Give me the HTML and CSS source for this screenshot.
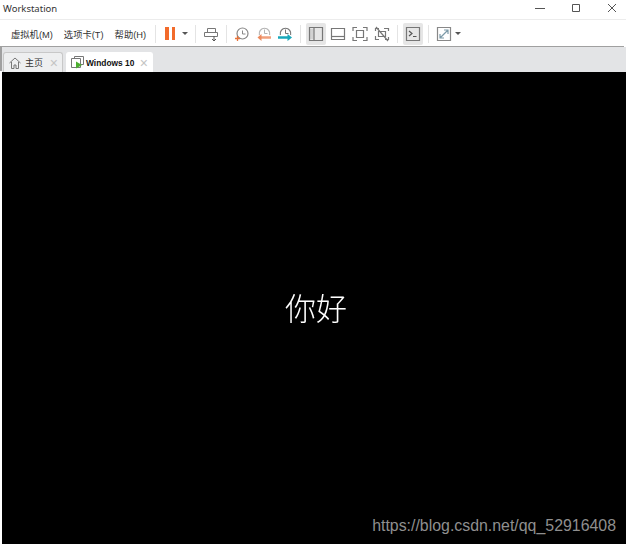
FILE: index.html
```html
<!DOCTYPE html>
<html lang="en">
  <head>
    <meta charset="UTF-8" />
    <title>Workstation</title>
    <link rel="stylesheet" href="styles.css">
  </head>
  <body>
    <div class="title-bar">
      <span class="title-text">Workstation</span>
      <div class="window-buttons">
        <svg width="12" height="12" viewBox="0 0 12 12"><path d="M1 6.500h10" stroke="#555" fill="none"/></svg>
        <svg width="12" height="12" viewBox="0 0 12 12"><path d="M2.500 2.500h7v7h-7z" stroke="#555" fill="none"/></svg>
        <svg width="12" height="12" viewBox="0 0 12 12"><path d="M2 2l8 8M10 2l-8 8" stroke="#555" fill="none"/></svg>
      </div>
    </div>
    <div class="tool-bar">
      <div class="menu">
        <span class="menu-item">虚拟机(M)</span>
        <span class="menu-item">选项卡(T)</span>
        <span class="menu-item">帮助(H)</span>
      </div>
      <span class="tool-sep"></span>
      <div class="tool-group pause-group">
        <span class="pause-bar"></span>
        <span class="pause-bar"></span>
        <span class="caret pause-caret"></span>
      </div>
      <span class="tool-sep"></span>
      <span class="tool-icon">
        <svg width="16" height="16" viewBox="0 0 16 16" fill="none" stroke="#777"><path d="M4.500 6.500v-4h8v4"/><path d="M1.500 6.500h13v4h-13z"/><path d="M11 10v5M9 13l2 2 2-2" stroke="#555"/></svg>
      </span>
      <span class="tool-sep"></span>
      <div class="tool-group snapshots">
        <span class="tool-icon">
          <svg width="16" height="16" viewBox="0 0 16 16" fill="none"><circle cx="8.500" cy="7.500" r="5.500" stroke="#888" stroke-width="1.200"/><path d="M8.500 4.500v3.500h3" stroke="#888"/><path d="M3.500 10v5M1 12.500h5" stroke="#e8743b" stroke-width="1.300"/></svg>
        </span>
        <span class="tool-icon">
          <svg width="16" height="16" viewBox="0 0 16 16" fill="none"><path d="M3.400 9a5.300 5.300 0 1 1 10.200 0" stroke="#b4b4b4" stroke-width="1.200"/><path d="M8.500 3.500v4h3" stroke="#b4b4b4"/><path d="M4 11.500h11" stroke="#f0a07c" stroke-width="2.500"/><path d="M5.500 8L1.500 11.500 5.500 15z" fill="#ec8a5e"/></svg>
        </span>
        <span class="tool-icon">
          <svg width="16" height="16" viewBox="0 0 16 16" fill="none"><path d="M3.400 9a5.300 5.300 0 1 1 10.200 0" stroke="#777" stroke-width="1.200"/><path d="M8.500 3.500v4h3" stroke="#777"/><path d="M1 11.500h11" stroke="#18a8bb" stroke-width="2.500"/><path d="M10.500 8l4.500 3.500-4.500 3.500z" fill="#18a8bb"/></svg>
        </span>
      </div>
      <span class="tool-sep"></span>
      <div class="tool-group views">
        <span class="tool-icon wide active">
          <svg width="16" height="16" viewBox="0 0 16 16" fill="none" stroke="#777" stroke-width="1.200"><path d="M2 3h3.500v10H2z" fill="#d2d2d2" stroke="none"/><path d="M1.500 1.500h13v13h-13z"/><path d="M6 1.500v13"/></svg>
        </span>
        <span class="tool-icon wide">
          <svg width="16" height="16" viewBox="0 0 16 16" fill="none" stroke="#777" stroke-width="1.200"><path d="M1.500 2.500h13v11h-13z"/><path d="M1.500 10.500h13"/></svg>
        </span>
        <span class="tool-icon wide">
          <svg width="16" height="16" viewBox="0 0 16 16" fill="none" stroke="#777" stroke-width="1.200"><path d="M1 5V1.500H5M11 1.500h4V5M15 11v3.500H11M5 14.500H1V11"/><path d="M4.500 4.500h7v7h-7z"/></svg>
        </span>
        <span class="tool-icon wide">
          <svg width="16" height="16" viewBox="0 0 16 16" fill="none" stroke="#777" stroke-width="1.200"><path d="M1.500 5V2.500H5M10 2.500h4.500V5M14.500 11v2.500H11M5 13.500H1.500V10"/><path d="M4.500 5.500h7v5h-7z"/><path d="M2 1l12 14"/></svg>
        </span>
      </div>
      <span class="tool-sep"></span>
      <span class="tool-icon wide active console">
        <svg width="16" height="16" viewBox="0 0 16 16" fill="none" stroke="#777" stroke-width="1.200"><path d="M1.500 1.500h13v13h-13z"/><path d="M4 5l3 2.500L4 10M8 10.500h3.500" stroke="#555"/></svg>
      </span>
      <span class="tool-sep"></span>
      <div class="tool-group">
        <svg width="16" height="16" viewBox="0 0 16 16" fill="none" stroke="#888" stroke-width="1.200"><path d="M1.500 1.500h13v13h-13z"/><path d="M4 12l8-8M8 4h4v4M4 8v4h4" stroke="#7c9aa8"/></svg>
        <span class="caret"></span>
      </div>
    </div>
    <div class="tab-strip">
      <div class="tab">
        <svg width="12" height="12" viewBox="0 0 12 12" fill="none" stroke="#777"><path d="M.5 6L6 1l5.500 5M2.500 5v6.500h2.500V8h2v3.500h2.500V5"/></svg>
        <span class="tab-label">主页</span>
        <span class="tab-close">×</span>
      </div>
      <div class="tab tab-active">
        <svg width="14" height="13" viewBox="0 0 14 13" fill="none" stroke="#777"><path d="M3.500 2.500v-2h9v8h-3"/><path d="M.5 2.500h9v9h-9z"/><path d="M5 5.500v7l6-3.500z" fill="#4caf30" stroke="none"/></svg>
        <span class="tab-label">Windows 10</span>
        <span class="tab-close">×</span>
      </div>
    </div>
    <div class="screen">
      <span class="greeting">你好</span>
      <span class="watermark">https://blog.csdn.net/qq_52916408</span>
    </div>
  </body>
</html>
```

FILE: styles.css
```css
* {
  margin: 0;
  padding: 0;
  box-sizing: border-box;
}

body {
  width: 626px;
  height: 544px;
  overflow: hidden;
  background-color: #fff;
  font-family: "Liberation Sans", "Noto Sans CJK SC", sans-serif;
  display: flex;
  flex-direction: column;
}

.title-bar {
  height: 20px;
  display: flex;
  align-items: center;
  justify-content: space-between;
  border-bottom: 1px solid #ececec;
  padding: 0 8px 3px 3px;
}

.title-text {
  font-family: "Noto Sans", sans-serif;
  font-size: 9.5px;
  color: #333;
}

.window-buttons {
  display: flex;
  gap: 24px;
}

.tool-bar {
  height: 27px;
  display: flex;
  align-items: center;
  padding-left: 11px;
}

.menu {
  width: 137px;
  display: flex;
  gap: 11px;
  font-size: 9.3px;
  white-space: nowrap;
  color: #333;
}

.tool-sep {
  width: 1px;
  height: 18px;
  background-color: #e4e4e4;
  margin: 0 7px;
}

.tool-group {
  display: flex;
  align-items: center;
}

.tool-icon {
  width: 16px;
  height: 22px;
  display: flex;
  align-items: center;
  justify-content: center;
}

.tool-icon.wide {
  width: 20px;
}

.tool-icon.active {
  background-color: #e6e6e6;
  border-radius: 2px;
}

.pause-group {
  gap: 3px;
  padding-left: 2px;
}

.pause-bar {
  width: 3.5px;
  height: 13px;
  background-color: #f26b2b;
}

.caret {
  width: 0;
  height: 0;
  border-left: 3.5px solid transparent;
  border-right: 3.5px solid transparent;
  border-top: 3.5px solid #555;
  margin-left: 3px;
}

.pause-caret {
  margin-left: 4px;
}

.snapshots {
  gap: 5.5px;
}

.views {
  gap: 2px;
  margin: 0 -2px;
}

.console {
  margin: 0 -2px;
}

.tab-strip {
  height: 25px;
  margin-left: 2px;
  display: flex;
  align-items: flex-end;
  gap: 3px;
  padding-left: 1px;
  background-color: #e3e4e6;
  box-shadow: -2px -1px 0 #a0a0a0;
}

.tab {
  height: 20px;
  width: 60px;
  display: flex;
  align-items: center;
  gap: 4px;
  padding: 0 4px 0 5px;
  background-color: #eeeff0;
  border: 1px solid #c8c8c8;
  border-bottom: none;
  border-radius: 3px 3px 0 0;
}

.tab-active {
  width: 87px;
  gap: 1px;
  padding-left: 4px;
  background-color: #fff;
  border-color: #fff;
}

.tab-label {
  font-size: 9px;
  color: #333;
  flex: 1;
  white-space: nowrap;
}

.tab-active .tab-label {
  font-weight: bold;
  font-size: 8.4px;
  color: #111;
}

.tab-close {
  font-size: 14px;
  line-height: 1;
  color: #c4c4c4;
}

.screen {
  flex: 1;
  margin-left: 2px;
  background-color: #000;
  display: flex;
  align-items: center;
  justify-content: center;
  position: relative;
}

.greeting {
  font-family: "Noto Sans CJK SC", sans-serif;
  font-weight: 300;
  font-size: 31px;
  color: #fff;
  padding: 0 0 4px 4px;
  will-change: transform;
}

.watermark {
  position: absolute;
  right: 10px;
  bottom: 9px;
  font-size: 15.9px;
  color: #8f8f8f;
}
```
